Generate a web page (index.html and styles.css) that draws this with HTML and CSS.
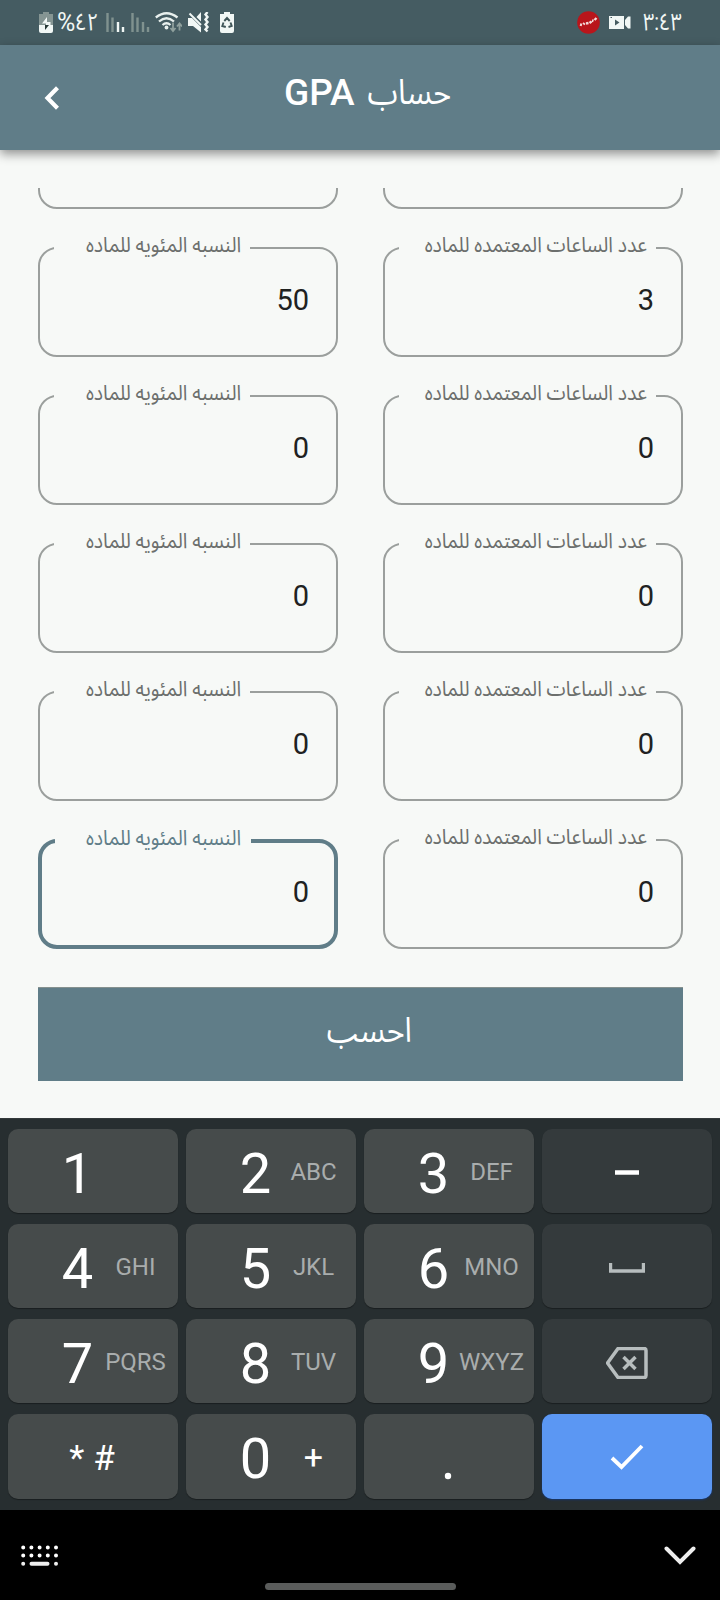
FILE: index.html
```
<!DOCTYPE html>
<html lang="ar">
<head>
<meta charset="utf-8">
<title>حساب GPA</title>
<link rel="stylesheet" href="styles.css">
</head>
<body>
<div class="screen">
  <header class="status">
    <div class="status-left">
      <svg class="i-batt" width="14" height="21" viewBox="0 0 14 21"><path d="M4 0h6v2h4v11H0V2h4z" fill="#859593"/><path d="M0 13h14v6q0 2-2 2H2q-2 0-2-2z" fill="#f1f7f5"/><path d="M8 5 3 11.500h4V13h4.500L11.500 10H8z" fill="#f1f7f5"/><path d="M6 13h4l-4 5z" fill="#263836"/></svg>
      <span class="pct" dir="ltr"><span class="sign">%</span><span class="num">٤٢</span></span>
      <svg class="i-sig" width="19" height="20" viewBox="0 0 19 20"><path d="M1.500 0v19M6.500 4.500v14.500" stroke="#80928f" stroke-width="2.400"/><path d="M12 9v10M17 14v5" stroke="#f1f7f5" stroke-width="2.400"/></svg>
      <svg class="i-sig2" width="19" height="20" viewBox="0 0 19 20"><path d="M1.500 0v19M6.500 4.500v14.500M12 9v10M17 14v5" stroke="#80928f" stroke-width="2.400"/></svg>
      <svg class="i-wifi" width="27" height="21" viewBox="0 0 27 21"><g fill="none" stroke="#e8f0ee" stroke-width="2.300"><path d="M.8 5.500Q11.500-3 22.500 5.500M4 9.500q7.500-6.500 15 0M7.500 13q4-3.500 8 0"/></g><circle cx="11.500" cy="15.500" r="1.900" fill="#e8f0ee"/><path d="M18 10.500v7M15.500 16l2.500 3 2.500-3M24.500 18.500v-6M22 14.500l2.500-3 2.500 3" stroke="#8fa09d" stroke-width="1.800" fill="none"/></svg>
      <svg class="i-mute" width="22" height="21" viewBox="0 0 22 21"><path d="M0 6h4l9 9v5.500L5 14H0zM13 0v9.500L8.500 5z" fill="#f1f7f5"/><path d="M1.500 1.500 13 13" stroke="#f1f7f5" stroke-width="2"/><path d="m19.500 0-2 2.500 2 2.500-2 2.500 2 2.500-2 2.500 2 2.500-2 2.500 2 2" stroke="#f1f7f5" stroke-width="2.400" fill="none"/></svg>
      <svg class="i-save" width="14" height="21" viewBox="0 0 14 21"><path d="M4 0h6v2h4v17q0 2-2 2H2q-2 0-2-2V2h4z" fill="#f1f7f5"/><path d="m4.300 9 2.700-3 2.700 3M10.500 10.500l1.200 3.500-3.200 1M5.800 15l-3.500-1 1.200-3.500" fill="none" stroke="#3f5558" stroke-width="1.900"/></svg>
    </div>
    <div class="status-right">
      <svg class="i-rec" width="23" height="23" viewBox="0 0 23 23"><circle cx="11.500" cy="11.500" r="11.300" fill="#b9151b"/><path d="m3 13.500 2 .5M6.500 13.500l1-1.500M9 12.500l2.500-.5M12.500 12l2-1.500M15 9.500l1.500.5M17.500 9l2-2" fill="none" stroke="#f4dada" stroke-width="2.400"/></svg>
      <svg class="i-cam" width="22" height="13" viewBox="0 0 22 13"><path d="M0 0h15v13H0zM16 4l3-3.500h2.500v12H19L16 9z" fill="#f1f7f5"/><path d="m6 3.500 4.500 3L6 9.500z" fill="#455b60"/><path d="M1.500 1.500h1.500" stroke="#455b60"/></svg>
      <span class="time" dir="ltr">٣:٤٣</span>
    </div>
  </header>
  <div class="appbar">
    <svg class="back" width="16" height="24" viewBox="0 0 16 24"><path d="M13.500 1.800 3.500 12l10 10.200" fill="none" stroke="#fff" stroke-width="4.200"/></svg>
    <h1 class="title" dir="rtl"><span class="title-ar">حساب</span><span class="title-en">GPA</span></h1>
  </div>
  <main class="form">
    <div class="rows">
      <div class="row"><div class="field"></div><div class="field"></div></div>
      <div class="row">
        <div class="field"><span class="label pc" dir="rtl"><span class="txt">النسبه المئويه للماده</span></span>50</div>
        <div class="field"><span class="label hr" dir="rtl"><span class="txt">عدد الساعات المعتمده للماده</span></span>3</div>
      </div>
      <div class="row">
        <div class="field"><span class="label pc" dir="rtl"><span class="txt">النسبه المئويه للماده</span></span>0</div>
        <div class="field"><span class="label hr" dir="rtl"><span class="txt">عدد الساعات المعتمده للماده</span></span>0</div>
      </div>
      <div class="row">
        <div class="field"><span class="label pc" dir="rtl"><span class="txt">النسبه المئويه للماده</span></span>0</div>
        <div class="field"><span class="label hr" dir="rtl"><span class="txt">عدد الساعات المعتمده للماده</span></span>0</div>
      </div>
      <div class="row">
        <div class="field"><span class="label pc" dir="rtl"><span class="txt">النسبه المئويه للماده</span></span>0</div>
        <div class="field"><span class="label hr" dir="rtl"><span class="txt">عدد الساعات المعتمده للماده</span></span>0</div>
      </div>
      <div class="row">
        <div class="field focus"><span class="label pc" dir="rtl"><span class="txt">النسبه المئويه للماده</span></span>0</div>
        <div class="field"><span class="label hr" dir="rtl"><span class="txt">عدد الساعات المعتمده للماده</span></span>0</div>
      </div>
    </div>
    <div class="submit" dir="rtl"><span class="submit-txt">احسب</span></div>
  </main>
  <section class="keys">
    <div class="key"><b>1</b></div>
    <div class="key"><b>2</b><i>ABC</i></div>
    <div class="key"><b>3</b><i>DEF</i></div>
    <div class="key dark"><svg width="24" height="5" viewBox="0 0 24 5"><path d="M0 2.500h24" stroke="#fff" stroke-width="4.500"/></svg></div>
    <div class="key"><b>4</b><i>GHI</i></div>
    <div class="key"><b>5</b><i>JKL</i></div>
    <div class="key"><b>6</b><i>MNO</i></div>
    <div class="key dark"><svg width="36" height="10" viewBox="0 0 36 10"><path d="M1.500 0v8h33V0" fill="none" stroke="#b7bdbe" stroke-width="3.400"/></svg></div>
    <div class="key"><b>7</b><i>PQRS</i></div>
    <div class="key"><b>8</b><i>TUV</i></div>
    <div class="key"><b>9</b><i>WXYZ</i></div>
    <div class="key dark"><svg width="42" height="32" viewBox="0 0 42 32"><path d="M12 1.500h26q2 0 2 2v25q0 2-2 2H12L1.500 16zM17.500 10l12 12M29.500 10l-12 12" fill="none" stroke="#b7bdbe" stroke-width="3.500" stroke-linejoin="round"/></svg></div>
    <div class="key sym"><span>*</span><span>#</span></div>
    <div class="key"><b>0</b><i class="plus">+</i></div>
    <div class="key dot"><svg width="8" height="8" viewBox="0 0 8 8"><circle cx="4" cy="4" r="3.200" fill="#fff"/></svg></div>
    <div class="key enter"><svg width="34" height="26" viewBox="0 0 34 26"><path d="m2 14 9.500 9L32 2" fill="none" stroke="#fff" stroke-width="3.800"/></svg></div>
  </section>
  <footer class="nav">
    <svg class="kb" width="38" height="22" viewBox="0 0 38 22"><path d="M2.200 2.500H36M2.200 10.600H36" stroke="#fff" stroke-width="4" stroke-linecap="round" stroke-dasharray="0 8.200"/><path d="M2.200 18.800h0M35 18.800h0M10.500 18.800h16" stroke="#eee" stroke-width="4" stroke-linecap="round"/></svg>
    <div class="pill"></div>
    <svg class="down" width="32" height="19" viewBox="0 0 32 19"><path d="M2.500 2.500 16 16 29.500 2.500" fill="none" stroke="#eee" stroke-width="4" stroke-linecap="round"/></svg>
  </footer>
</div>
</body>
</html>
```

FILE: styles.css
```
* { box-sizing: border-box; }
body { margin: 0; background: #f7f9f7; }
svg { display: block; flex: none; }
.screen {
  width: 720px; height: 1600px; overflow: hidden;
  display: flex; flex-direction: column;
  background: #f7f9f7;
  font-family: Roboto, "Noto Sans Arabic", "DejaVu Sans", sans-serif;
}
.status {
  height: 45px; flex: none; background: #455c62; color: #f1f7f5;
  display: flex; justify-content: space-between;
  padding: 0 38px 0 39px;
}
.status-left, .status-right { display: flex; align-items: flex-start; }
.i-batt { margin-top: 12px; }
.pct { display: flex; line-height: 45px; width: 41px; margin-left: 4px; white-space: nowrap; }
.sign { font-size: 25px; }
.num { font-size: 22px; transform: scale(.93, 1.1); transform-origin: 0 60%; }
.i-sig { margin: 13px 0 0 8px; }
.i-sig2 { margin: 13px 0 0 6px; }
.i-wifi { margin: 12px 0 0 5px; }
.i-mute { margin: 12px 0 0 6px; }
.i-save { margin: 12px 0 0 10px; }
.i-rec { margin-top: 11px; }
.i-cam { margin: 16px 0 0 9px; }
.time { font-size: 22px; line-height: 45px; margin-left: 12px; width: 39px; white-space: nowrap; transform: scale(.9, 1.1); transform-origin: 0 70%; }
.appbar {
  height: 105px; flex: none; background: #607d88; color: #fff;
  display: flex; align-items: flex-start; padding-left: 44px;
  box-shadow: 0 4px 10px rgba(0, 0, 0, .42);
  z-index: 1;
}
.back { margin-top: 41px; }
.title {
  margin: 24px 0 0 224px; width: 167px;
  display: flex; justify-content: space-between;
  font-size: 37px; line-height: 48px; font-weight: 500;
}
.title-ar { font-weight: 400; font-size: 32px; transform: scale(.96, 1.08); transform-origin: 100% 70%; }
.form { height: 968px; flex: none; padding: 38px 37px 0 38px; }
.rows {
  height: 761px; overflow: hidden;
  display: flex; flex-direction: column; justify-content: flex-end; gap: 38px;
}
.row { flex: none; display: flex; justify-content: space-between; }
.field {
  position: relative; width: 300px; height: 110px;
  border: 2px solid #9b9f9d; border-radius: 19px;
  padding: 33px 27px 0 0; text-align: right;
  font-size: 29px; line-height: 36px; color: #202221;
}
.focus { border: 4px solid #607d88; padding: 31px 25px 0 0; }
.label {
  position: absolute; top: -19px; left: 14px; height: 30px;
  background: #f7f9f7; color: #6c6f6d; padding-right: 9px;
  font-size: 19px; line-height: 31px; white-space: nowrap;
}
.focus .label { top: -20px; left: 13px; padding-right: 10px; color: #607d88; }
.txt { display: inline-block; transform: scale(1.02, 1.13); transform-origin: 100% 60%; }
.pc { width: 196px; }
.hr { width: 257px; }
.submit {
  height: 94px; margin-top: 38px; background: #607d88; color: #fff;
  border-top: 1px solid #85918f;
  display: flex; justify-content: center; align-items: center;
  font-size: 32px; padding: 0 0 7px 18px;
}
.submit-txt { transform: scale(.96, 1.08); }
.keys {
  height: 392px; flex: none; background: #272e30; padding: 10px 8px 11px;
  border-top: 1px solid #34393b;
  display: grid; grid-template-columns: repeat(4, 170px); grid-template-rows: repeat(3, 84px) 85px;
  gap: 11px 8px;
}
.key {
  background: #464b4b; border-radius: 10px; color: #fff;
  box-shadow: 0 1px 1px rgba(0, 0, 0, .35);
  display: grid; grid-template-columns: 52px 35px 81px; align-items: center;
}
.key b { grid-column: 2; font-weight: 400; font-size: 56px; line-height: 80px; padding-top: 5px; justify-self: center; }
.key i { grid-column: 3; font-style: normal; font-size: 24px; color: #a9adad; justify-self: center; }
.key .plus { color: #fff; font-size: 34px; }
.dark { background: #343a3c; }
.dark, .enter, .dot, .sym { display: flex; justify-content: center; align-items: center; }
.dark { padding-top: 3px; }
.dot { padding: 38px 2px 0 0; }
.enter { background: #5b97f3; box-shadow: 0 1px 2px #17376f; }
.sym { font-size: 35px; gap: 9px; padding: 3px 2px 0 0; }
.nav { height: 90px; flex: none; background: #000; display: flex; justify-content: space-between; padding: 0 24px 0 21px; }
.kb { margin-top: 35px; }
.pill { width: 191px; height: 7px; border-radius: 4px; background: #5a5c5b; margin: 73px 3px 0 0; }
.down { margin-top: 36px; }
```
